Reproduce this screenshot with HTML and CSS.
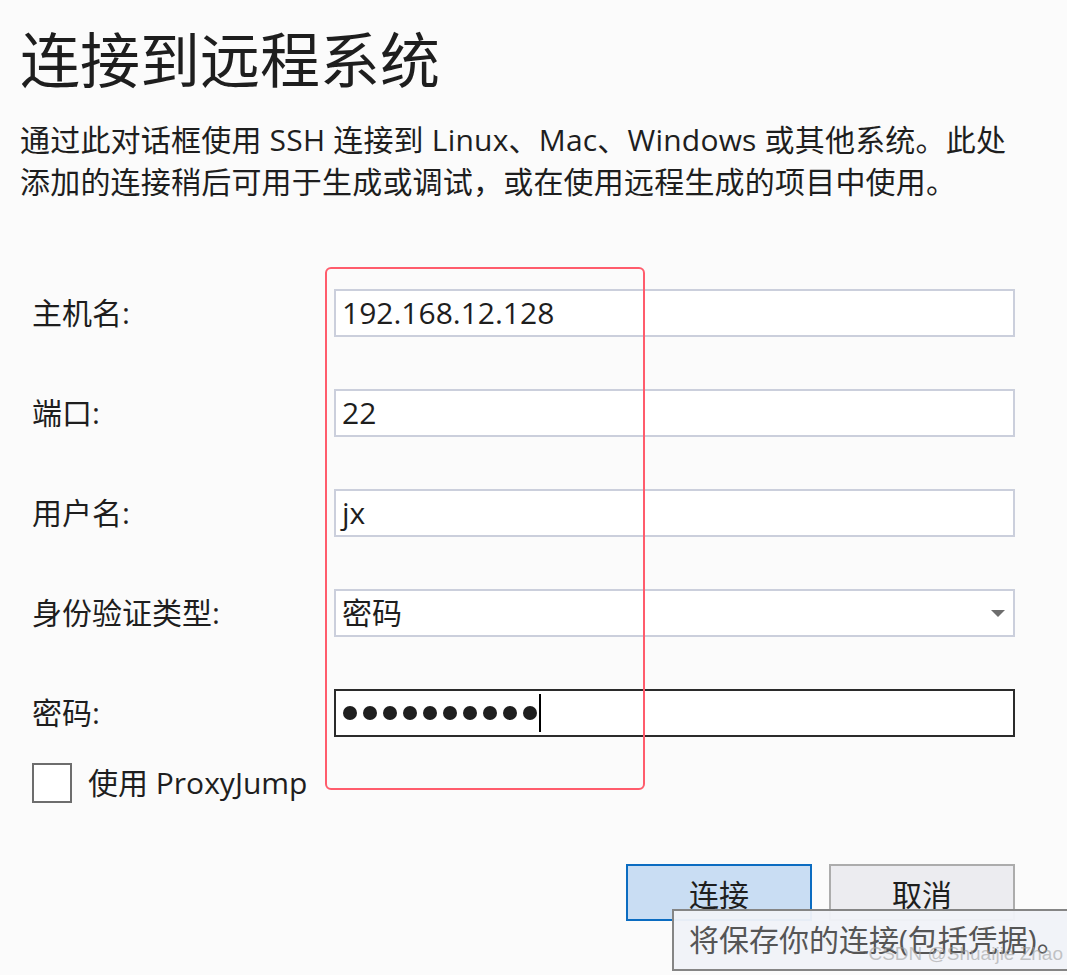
FILE: index.html
```html
<!DOCTYPE html>
<html lang="zh-CN">
<head>
    <meta charset="UTF-8">
    <title>连接到远程系统</title>
    <link rel="stylesheet" href="styles.css">
</head>
<body>
    <div class="dialog">
        <h1>连接到远程系统</h1>
        <p class="intro">通过此对话框使用 SSH 连接到 Linux、Mac、Windows 或其他系统。此处<br>添加的连接稍后可用于生成或调试，或在使用远程生成的项目中使用。</p>

        <div class="form">
            <label class="label">主机名:</label>
            <div class="field">192.168.12.128</div>

            <label class="label">端口:</label>
            <div class="field">22</div>

            <label class="label">用户名:</label>
            <div class="field">jx</div>

            <label class="label">身份验证类型:</label>
            <div class="field select">密码<span class="arrow"></span></div>

            <label class="label">密码:</label>
            <div class="field focused">
                <span class="dot"></span><span class="dot"></span><span class="dot"></span><span class="dot"></span><span class="dot"></span><span class="dot"></span><span class="dot"></span><span class="dot"></span><span class="dot"></span><span class="dot"></span><span class="caret"></span>
            </div>
        </div>

        <div class="check-row">
            <span class="checkbox"></span>
            <span>使用 ProxyJump</span>
        </div>

        <div class="buttons">
            <button class="btn primary">连接</button>
            <button class="btn">取消</button>
        </div>

        <!-- annotation + tooltip overlays -->
        <div class="highlight"></div>
        <div class="tooltip">将保存你的连接(包括凭据)。</div>
        <div class="watermark">CSDN @Shuaijie Zhao</div>
    </div>
</body>
</html>
```

FILE: styles.css
```css
body {
    margin: 0;
    background-color: #fbfbfb;
    color: #1e1e1e;
    font-family: "Open Sans", "Noto Sans CJK SC", sans-serif;
    overflow: hidden;
}

.dialog {
    position: relative;
    width: 1067px;
    height: 975px;
    padding: 20px 20px 0;
    box-sizing: border-box;
}

h1 {
    margin: 0;
    font-size: 60px;
    font-weight: normal;
    line-height: 80px;
}

.intro {
    margin: 19px 0 0;
    font-size: 30px;
    line-height: 42px;
    letter-spacing: 0.2px;
}

.form {
    display: grid;
    grid-template-columns: 302px 681px;
    grid-template-rows: repeat(5, 48px);
    row-gap: 52px;
    align-items: center;
    margin: 86px 0 0 12px;
    font-size: 30px;
    line-height: 40px;
}

.field {
    display: flex;
    align-items: center;
    height: 48px;
    box-sizing: border-box;
    padding-left: 6px;
    background-color: #fff;
    border: 2px solid #cbcfdc;
    font-size: 30px;
}

.select {
    justify-content: space-between;
    padding-right: 8px;
}

.arrow {
    width: 0;
    height: 0;
    border-left: 7px solid transparent;
    border-right: 7px solid transparent;
    border-top: 7px solid #6d6d6d;
}

.focused {
    border-color: #2b2b2b;
    padding-left: 7px;
}

.dot {
    width: 14px;
    height: 14px;
    margin-right: 6px;
    border-radius: 50%;
    background-color: #1e1e1e;
}

.caret {
    width: 2px;
    height: 38px;
    margin-left: -4px;
    background-color: #000;
}

.check-row {
    display: flex;
    align-items: center;
    gap: 16px;
    height: 40px;
    margin: 26px 0 0 12px;
    font-size: 30px;
    line-height: 40px;
}

.checkbox {
    width: 40px;
    height: 40px;
    box-sizing: border-box;
    border: 2px solid #6d6d6d;
    background-color: #fff;
}

.buttons {
    display: flex;
    justify-content: flex-end;
    gap: 17px;
    width: 995px;
    margin-top: 61px;
}

.btn {
    width: 186px;
    height: 57px;
    border: 2px solid #acacac;
    background-color: #ececf0;
    color: #1e1e1e;
    font-family: inherit;
    font-size: 30px;
    padding: 0;
}

.btn.primary {
    border-color: #0b6cc1;
    background-color: #c9ddf3;
}

.highlight {
    position: absolute;
    left: 325px;
    top: 267px;
    width: 320px;
    height: 523px;
    box-sizing: border-box;
    border: 2px solid #ff5c6c;
    border-radius: 6px;
}

.tooltip {
    position: absolute;
    left: 672px;
    top: 909px;
    width: 430px;
    height: 62px;
    box-sizing: border-box;
    padding-left: 15px;
    border: 2px solid #858585;
    background-color: rgba(240, 242, 248, 0.96);
    color: #555;
    font-size: 30px;
    line-height: 58px;
}

.watermark {
    position: absolute;
    right: 4px;
    top: 943px;
    font-family: "Liberation Sans", sans-serif;
    font-size: 19px;
    color: rgba(160, 160, 160, 0.6);
}
```
